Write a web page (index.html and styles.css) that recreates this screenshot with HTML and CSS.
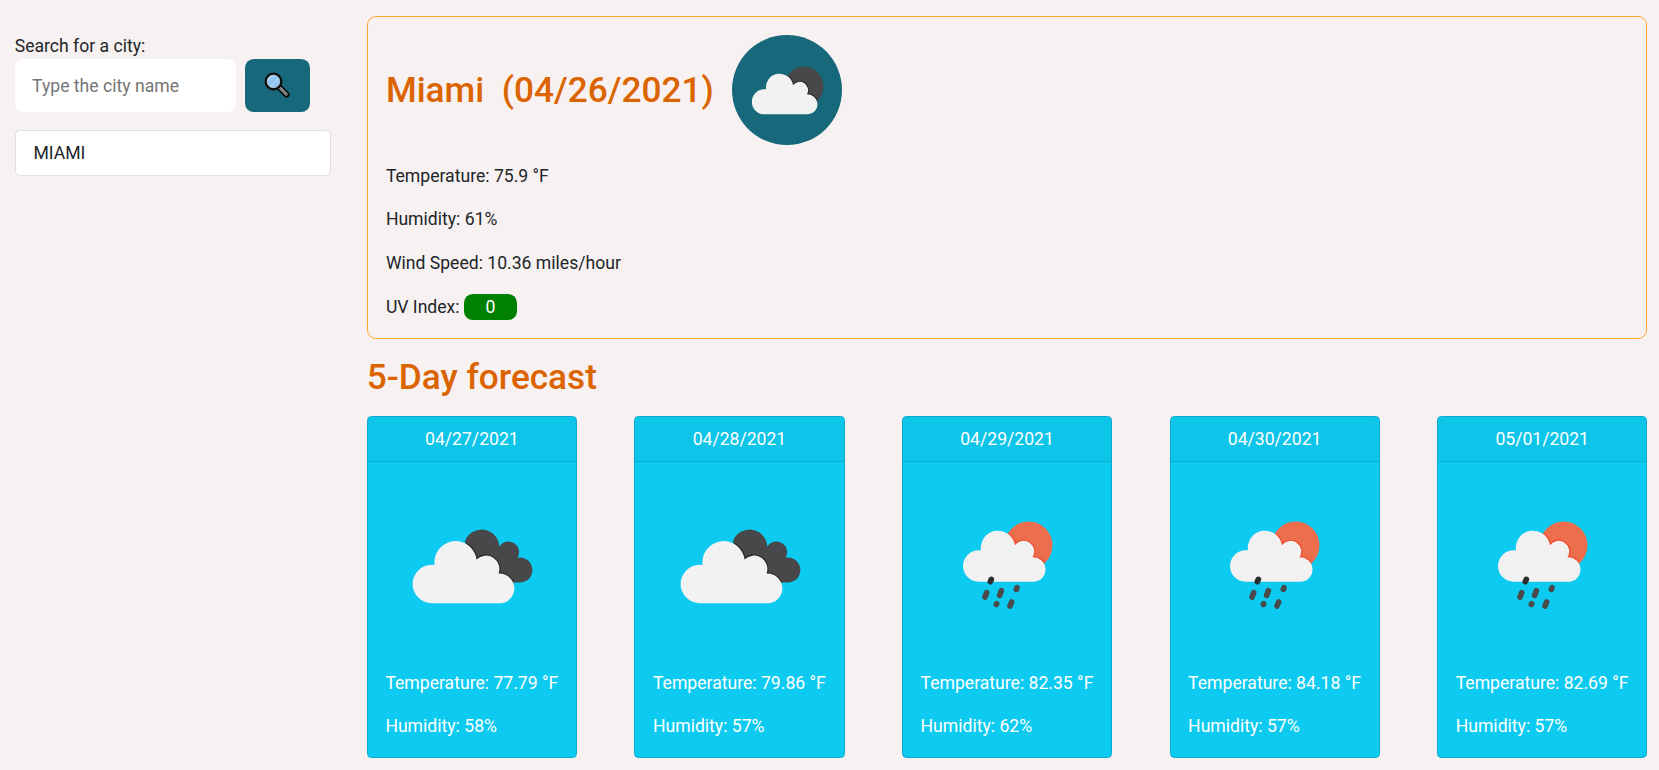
FILE: index.html
```html
<!DOCTYPE html>
<html lang="en">
<head>
<meta charset="utf-8">
<title>Weather Dashboard</title>
<link rel="stylesheet" href="styles.css">
</head>
<body>
<svg class="defs" aria-hidden="true">
  <symbol id="clouds" viewBox="0 0 172.8 172.8">
    <g transform="translate(14.9 34.6) scale(.33333)">
      <clipPath id="dark-cloud"><path d="M195 80A53 53 0 0 1 298 96A32 32 0 0 1 353 129A37.800 37.800 0 1 1 359 204H250Z"/></clipPath>
      <path fill="#48484a" d="M195 80A53 53 0 0 1 298 96A32 32 0 0 1 353 129A37.800 37.800 0 1 1 359 204H250Z"/>
      <path fill="none" stroke="#28282a" stroke-width="7" clip-path="url(#dark-cloud)" d="M96 266A58 58 0 0 1 38 208A58 58 0 0 1 104 151A63 63 0 1 1 230 135A40 40 0 0 1 296 177A44.700 44.700 0 0 1 304 266Z"/>
      <path fill="#f1f2f1" d="M96 266A58 58 0 0 1 38 208A58 58 0 0 1 104 151A63.500 63.500 0 1 1 230 135A40 40 0 0 1 296 177A44.700 44.700 0 0 1 304 266Z"/>
    </g>
  </symbol>
  <symbol id="rain" viewBox="0 0 172.8 172.8">
    <g transform="translate(20 29.7) scale(.33333)">
      <clipPath id="sun"><circle cx="263" cy="107" r="71.500"/></clipPath>
      <circle cx="263" cy="107" r="71.500" fill="#ec6e4c"/>
      <path fill="none" stroke="#ee4b2b" stroke-width="7" clip-path="url(#sun)" d="M113 216A47 47 0 0 1 113 122H120A51.500 51.500 0 1 1 222 107A31 31 0 0 1 274 143A36.500 36.500 0 1 1 280 216Z"/>
      <path fill="#f1f1f2" d="M113 216A47 47 0 0 1 113 122H120A51.500 51.500 0 1 1 222 107A31 31 0 0 1 274 143A36.500 36.500 0 1 1 280 216Z"/>
      <g fill="none" stroke="#4a4a4b" stroke-width="17" stroke-linecap="round">
        <path stroke="#2d2d2e" d="M151 209L148 216"/>
        <path d="M137 249L132 262M181 243L176 257M228 234L226 239M167 282L166 284M212 277L207 289"/>
      </g>
    </g>
  </symbol>
  <symbol id="broken" viewBox="0 0 110 110">
    <g transform="translate(-12 -10) scale(.33333)">
      <clipPath id="moon"><circle cx="252" cy="184" r="58.500"/></clipPath>
      <circle cx="252" cy="184" r="58.500" fill="#48484a"/>
      <path fill="none" stroke="#28282a" stroke-width="6" clip-path="url(#moon)" d="M133 268A37.500 37.500 0 0 1 133 193H138A40.500 40.500 0 1 1 219 181A25 25 0 0 1 261 208A30 30 0 1 1 264 268Z"/>
      <path fill="#f1f2f1" d="M133 268A37.500 37.500 0 0 1 133 193H138A40.500 40.500 0 1 1 219 181A25 25 0 0 1 261 208A30 30 0 1 1 264 268Z"/>
    </g>
  </symbol>
</svg>
<div class="page">
  <aside class="sidebar">
    <label class="search-label" for="city">Search for a city:</label>
    <form class="search">
      <input class="search-input" id="city" type="text" placeholder="Type the city name">
      <button class="search-button" type="button" aria-label="Search">
        <svg class="lens" viewBox="0 0 80 80">
          <path d="M45 45L67 67" stroke="#0b0b0b" stroke-width="18" stroke-linecap="round"/>
          <path d="M46 46L66 66" stroke="#7b8083" stroke-width="9" stroke-linecap="round"/>
          <path d="M48 45L66 63" stroke="#a9adaf" stroke-width="2" stroke-linecap="round"/>
          <circle cx="28" cy="28" r="23" fill="#8ec5f0" stroke="#0b0b0b" stroke-width="7"/>
          <path d="M10 32L32 10A19 19 0 0 0 10 32ZM16 42L43 16L45 20L21 45Z" fill="#a9d3f6"/>
          <circle cx="28" cy="28" r="18.500" fill="none" stroke="#c5bfd0" stroke-width="2"/>
        </svg>
      </button>
    </form>
    <ul class="history"><li class="history-item">MIAMI</li></ul>
  </aside>
  <main class="content">
    <section class="current">
      <div class="current-head">
        <h2 class="title city">Miami</h2>
        <h2 class="title date">(04/26/2021)</h2>
        <svg class="current-icon"><use href="#broken"/></svg>
      </div>
      <p>Temperature: 75.9 °F</p>
      <p>Humidity: 61%</p>
      <p>Wind Speed: 10.36 miles/hour</p>
      <p>UV Index: <span class="uv">0</span></p>
    </section>
    <h2 class="title">5-Day forecast</h2>
    <section class="forecast">
      <article class="card">
        <div class="card-header">04/27/2021</div>
        <div class="card-body"><svg class="card-icon"><use href="#clouds"/></svg><p>Temperature: 77.79 °F</p><p>Humidity: 58%</p></div>
      </article>
      <article class="card">
        <div class="card-header">04/28/2021</div>
        <div class="card-body"><svg class="card-icon"><use href="#clouds"/></svg><p>Temperature: 79.86 °F</p><p>Humidity: 57%</p></div>
      </article>
      <article class="card">
        <div class="card-header">04/29/2021</div>
        <div class="card-body"><svg class="card-icon"><use href="#rain"/></svg><p>Temperature: 82.35 °F</p><p>Humidity: 62%</p></div>
      </article>
      <article class="card">
        <div class="card-header">04/30/2021</div>
        <div class="card-body"><svg class="card-icon"><use href="#rain"/></svg><p>Temperature: 84.18 °F</p><p>Humidity: 57%</p></div>
      </article>
      <article class="card">
        <div class="card-header">05/01/2021</div>
        <div class="card-body"><svg class="card-icon"><use href="#rain"/></svg><p>Temperature: 82.69 °F</p><p>Humidity: 57%</p></div>
      </article>
    </section>
  </main>
</div>
</body>
</html>
```

FILE: styles.css
```css
* { box-sizing: border-box; }
html { font-size: 17.6px; }
body {
  margin: 0;
  background: #f7f1f1;
  color: #212529;
  font-family: Roboto, "Liberation Sans", sans-serif;
  line-height: 1.5;
}
p, h2, ul { margin: 0; padding: 0; }
.defs { position: absolute; width: 0; height: 0; }
.page {
  display: flex;
  gap: 36.1px;
  padding: 16px 11.7px 0 14.7px;
}
.sidebar { width: 316px; flex: none; padding-top: 16.6px; }
.search-label { display: block; }
.search { display: flex; gap: 9px; margin-bottom: 18px; }
.search-input {
  width: 221px;
  height: 53px;
  padding: 1px 17.4px 0;
  border: 0;
  border-radius: 8.8px;
  background: #fff;
  font: inherit;
}
.search-input::placeholder { color: #757575; opacity: 1; }
.search-button {
  display: flex;
  align-items: center;
  justify-content: center;
  width: 65px;
  height: 53px;
  padding: 0;
  border: 0;
  border-radius: 8.8px;
  background: #17687a;
}
.lens { width: 27px; height: 27px; margin-left: 1px; }
.history { list-style: none; }
.history-item {
  padding: 8.8px 17.8px;
  border: 1px solid #dfdfdf;
  border-radius: 4.4px;
  background: #fff;
}
.content {
  flex: 1;
  display: flex;
  flex-direction: column;
  gap: 17.1px;
}
.current {
  display: flex;
  flex-direction: column;
  gap: 17.5px;
  padding: 17.6px 17.6px 17.4px 18.1px;
  border: 1px solid #ffa52f;
  border-radius: 8.8px;
}
.current-head {
  display: flex;
  align-items: center;
  gap: 17.6px;
  margin-bottom: .5px;
}
.title { color: #db6400; font-size: 35.2px; font-weight: 500; line-height: 1.2; }
.city, .date { padding-top: 1.5px; }
.current-icon {
  width: 110px;
  height: 110px;
  margin-left: .8px;
  border-radius: 50%;
  background: #17687a;
}
.uv {
  display: inline-block;
  width: 53px;
  height: 26px;
  border-radius: 8.8px;
  background: #008000;
  color: #fff;
  text-align: center;
}
.forecast { display: flex; justify-content: space-between; padding-top: .7px; }
.card {
  width: 210.2px;
  border: 1px solid #0da9cd;
  border-radius: 4.4px;
  background: #0dcaf0;
  color: #fff;
  overflow: hidden;
}
.card-header {
  padding: 8.8px;
  border-bottom: 1px solid #0bacd0;
  background: #0dc4e9;
  text-align: center;
}
.card-body {
  display: flex;
  flex-direction: column;
  gap: 17.1px;
  padding: 17.6px 17.6px 17.8px;
  white-space: nowrap;
}
.card-icon { width: 172.8px; height: 172.8px; }
```
